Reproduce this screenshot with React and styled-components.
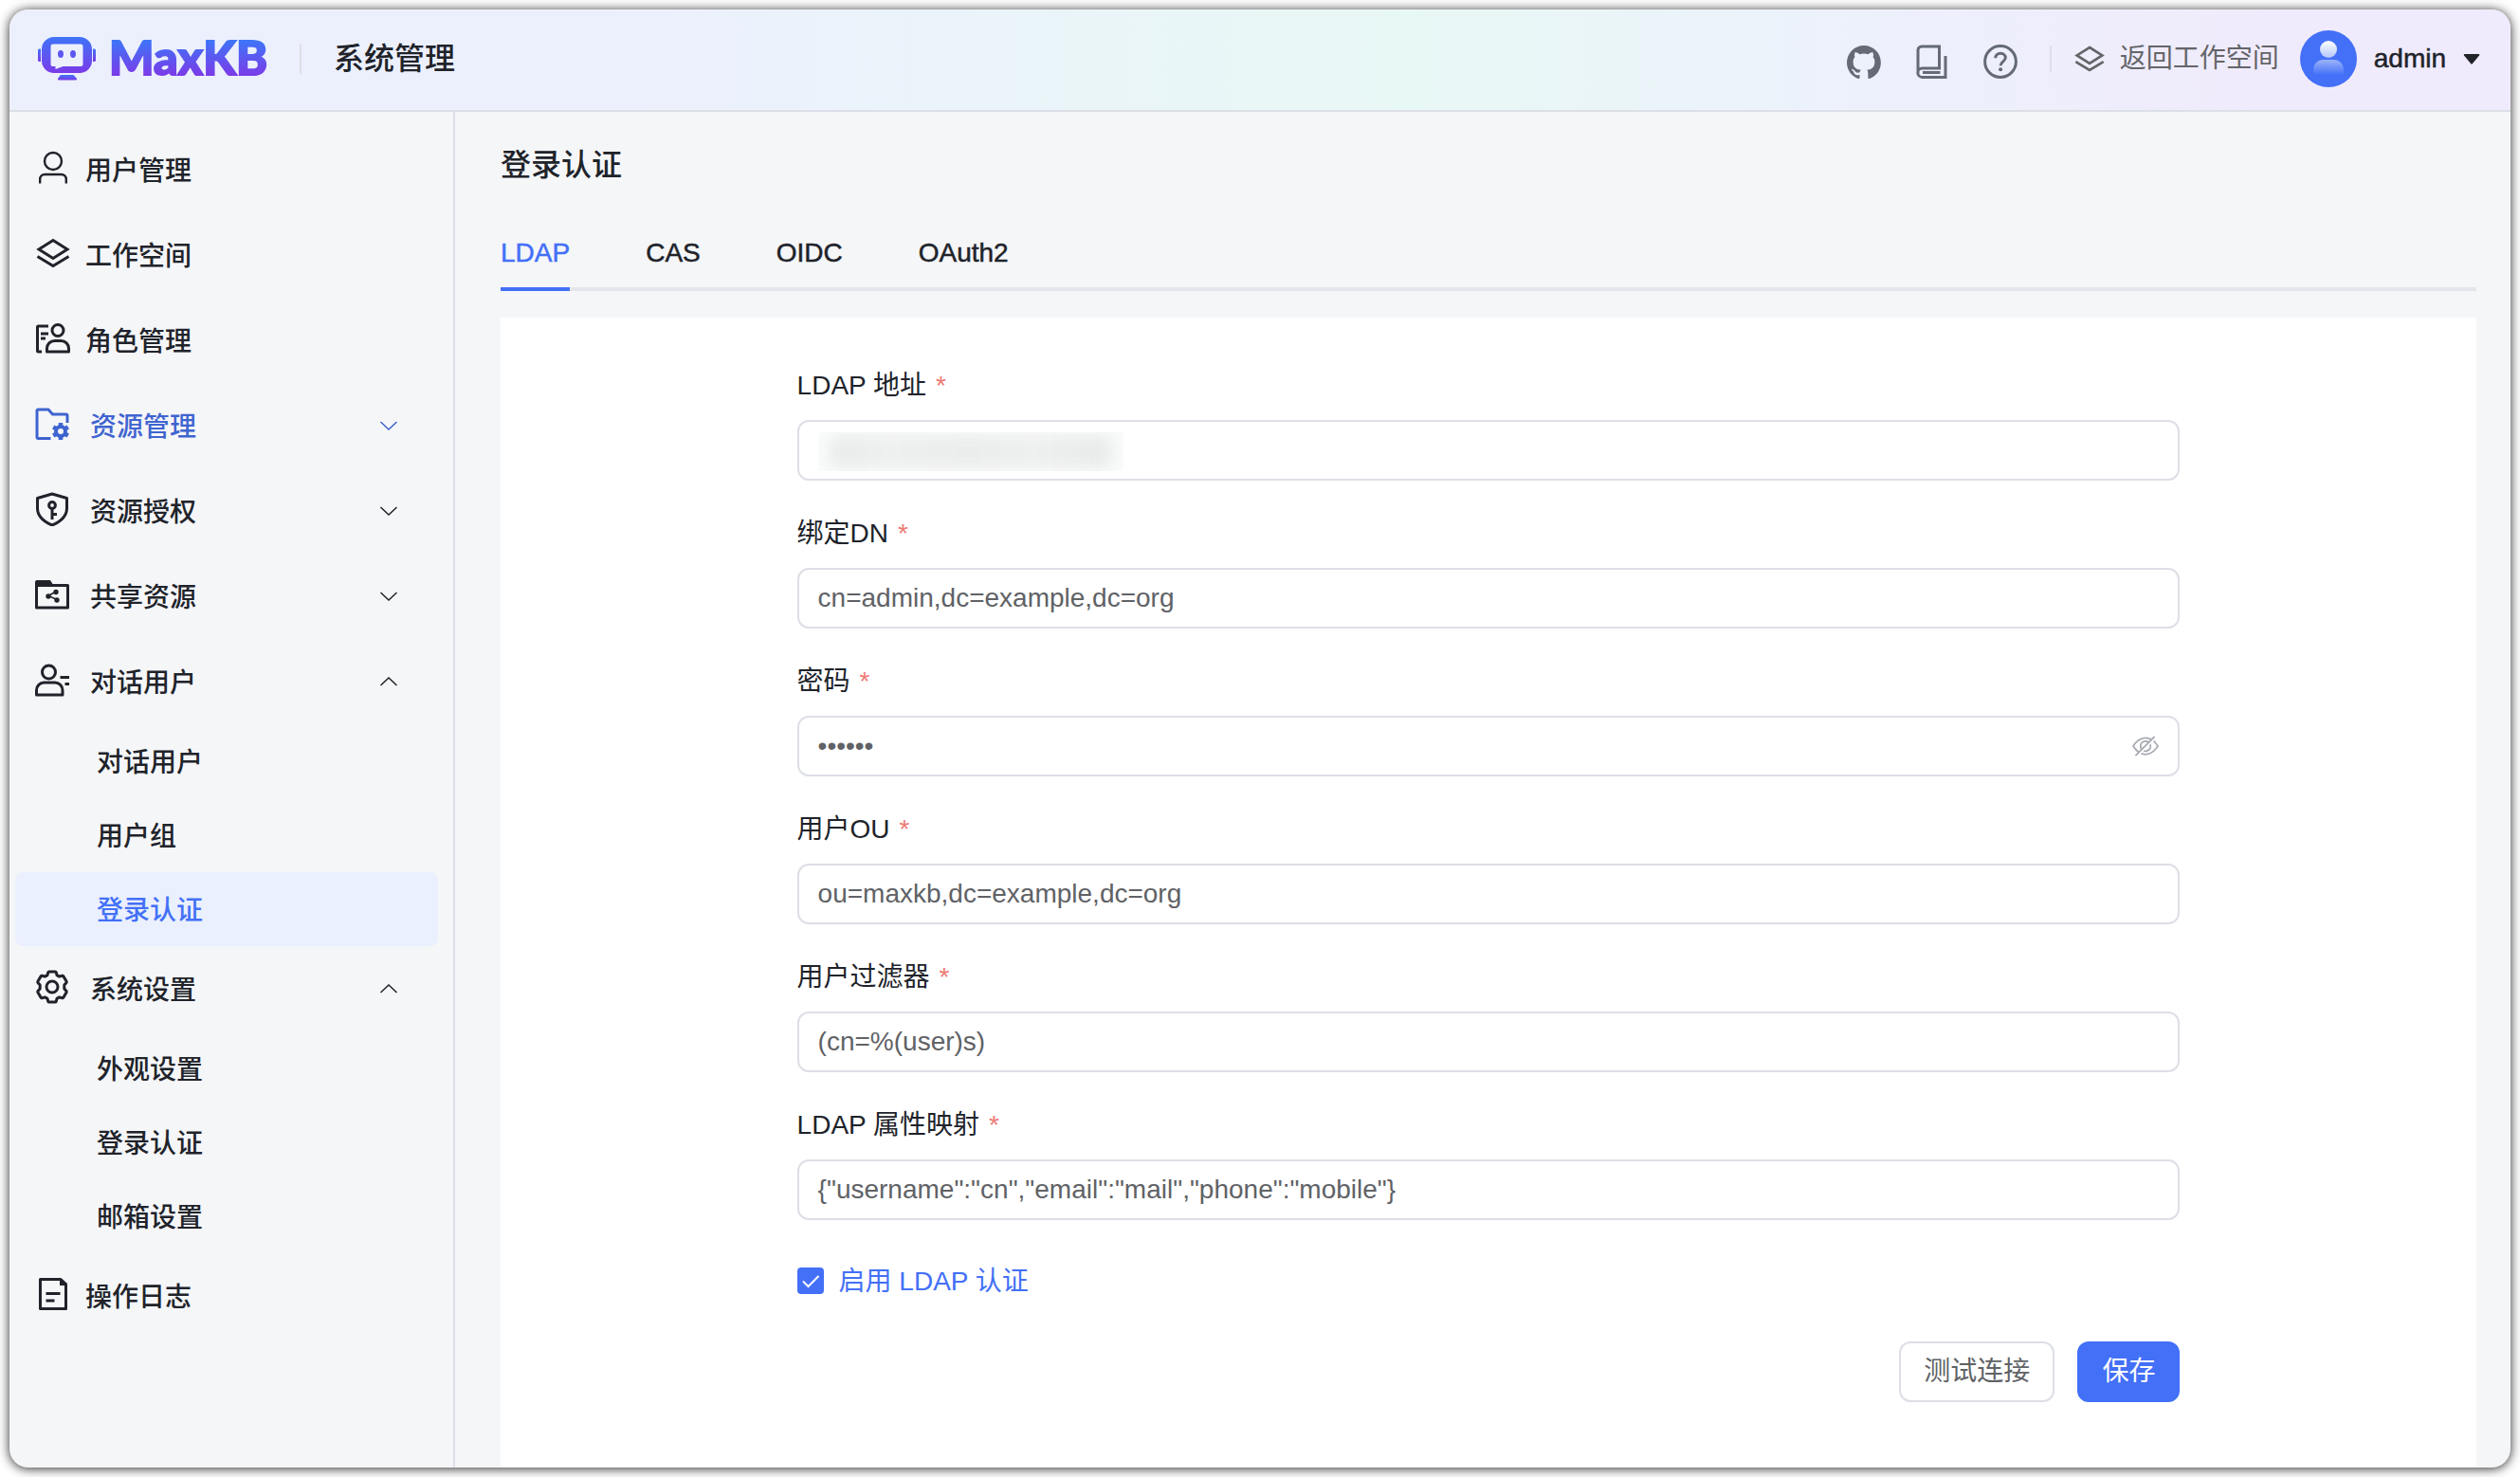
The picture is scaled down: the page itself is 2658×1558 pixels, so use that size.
import React, { useState } from "react";
import styled, { createGlobalStyle } from "styled-components";

const BLUE = "#4370f7";
const INK = "#20232a";
const LINE = "#dddfe6";

const GlobalStyle = createGlobalStyle`
  *, *::before, *::after { box-sizing: border-box; }
  body {
    margin: 0;
    background: #fff;
    color: ${INK};
    font-family: "Liberation Sans", "Noto Sans CJK SC", sans-serif;
    font-size: 28px;
    line-height: 44px;
  }
  button, input { font: inherit; color: inherit; }
`;

const Page = styled.div`
  min-height: 100vh;
  padding: 10px;
  display: flex;
`;

const Frame = styled.div`
  flex: 1;
  min-width: 0;
  display: flex;
  flex-direction: column;
  border-radius: 20px;
  overflow: hidden;
  background: #f5f6f8;
  box-shadow: 0 1px 12px rgba(0, 0, 0, 0.85);
`;

const Header = styled.header`
  display: flex;
  align-items: center;
  justify-content: space-between;
  height: 108px;
  padding: 0 32px 2px 30px;
  border-bottom: 2px solid ${LINE};
  background: linear-gradient(90deg, #ecf0fd 24%, #e8f8f5 56%, #edf0fc 76%, #f0ebfc 90%);
`;

const Brand = styled.div`
  display: flex;
  align-items: center;
`;

const BrandLink = styled.a`
  display: flex;
  align-items: center;
  gap: 13px;
  text-decoration: none;
`;

const Wordmark = styled.span`
  margin-bottom: 4px;
  font-family: Lato, sans-serif;
  font-weight: 900;
  font-size: 50px;
  line-height: 60px;
  color: transparent;
  -webkit-text-stroke: 2px transparent;
  background: linear-gradient(180deg, #3f74f8 22%, #7a3be8 82%);
  background-clip: text;
  -webkit-background-clip: text;
`;

const Divider = styled.span`
  width: 2px;
  height: ${(p) => p.$height}px;
  background: ${LINE};
`;

const SystemTitle = styled.strong`
  margin-left: 34px;
  font-size: 32px;
  font-weight: 500;
`;

const BrandDivider = styled(Divider)`
  margin-left: 34px;
`;

const HeaderActions = styled.div`
  display: flex;
  align-items: center;
`;

const IconLinks = styled.div`
  display: flex;
  gap: 36px;
  margin: 6px 34px 0 0;
`;

const IconLink = styled.a`
  display: flex;
  color: #646a76;
`;

const WorkspaceLink = styled.a`
  display: flex;
  align-items: center;
  gap: 16px;
  margin: 0 22px 0 24px;
  color: #646569;
  text-decoration: none;
`;

const AccountButton = styled.button`
  display: flex;
  align-items: center;
  gap: 18px;
  padding: 0;
  border: 0;
  background: none;
  cursor: pointer;
`;

const AccountName = styled.span`
  -webkit-text-stroke: 0.5px currentColor;
`;

const Body = styled.div`
  flex: 1;
  display: flex;
`;

const Sidebar = styled.nav`
  flex: none;
  width: 470px;
  padding: 16px 16px 16px 6px;
  border-right: 2px solid ${LINE};
  font-weight: 500;
`;

const MenuList = styled.ul`
  margin: 0;
  padding: 0;
  list-style: none;
`;

const MenuRow = styled.button`
  display: flex;
  align-items: center;
  gap: ${(p) => (p.$group ? 22 : 16)}px;
  width: 100%;
  height: 90px;
  padding: 0 42px 0 ${(p) => (p.$group ? 21 : 22)}px;
  border: 0;
  background: none;
  color: ${(p) => (p.$active ? "#3f64d0" : INK)};
  font-weight: 500;
  text-align: left;
  cursor: pointer;

  > svg:first-child { margin-bottom: 4px; }
`;

const MenuText = styled.span`
  flex: 1;
  padding-top: 3px;
`;

const SubLink = styled.a`
  display: flex;
  align-items: center;
  height: 78px;
  padding: 3px 0 0 86px;
  border-radius: 8px;
  background: ${(p) => (p.$active ? "#eaf0fd" : "transparent")};
  color: ${(p) => (p.$active ? BLUE : INK)};
  text-decoration: none;
`;

const Main = styled.main`
  flex: 1;
  min-width: 0;
  display: flex;
  flex-direction: column;
  padding: 34px 36px 0 48px;
`;

const PageTitle = styled.h1`
  margin: 0;
  font-size: 32px;
  font-weight: 500;
  line-height: 44px;
`;

const Tabs = styled.div`
  display: flex;
  gap: 80px;
  height: 80px;
  margin: 31px 0 28px;
  box-shadow: inset 0 -4px 0 #e4e6ec;
`;

const Tab = styled.button`
  padding: 4px 0 0;
  border: 0;
  border-bottom: 4px solid ${(p) => (p.$active ? BLUE : "transparent")};
  background: none;
  color: ${(p) => (p.$active ? BLUE : INK)};
  -webkit-text-stroke: 0.5px currentColor;
  cursor: pointer;
`;

const Panel = styled.section`
  flex: 1;
  padding: 48px 0 68px;
  background: #fff;
`;

const Form = styled.form`
  width: 70%;
  margin: 0 auto;
`;

const Field = styled.div`
  margin-bottom: 32px;
`;

const Label = styled.label`
  display: flex;
  gap: 10px;
  padding: 2px 0 14px;
`;

const Required = styled.span`
  color: #ee7b75;
`;

const InputBox = styled.div`
  position: relative;
  display: flex;
  align-items: center;
  height: 64px;
  padding: 0 20px;
  border: 2px solid ${LINE};
  border-radius: 12px;
  background: #fff;
`;

const Input = styled.input`
  flex: 1;
  min-width: 0;
  height: 60px;
  padding: 0;
  border: 0;
  outline: none;
  background: none;
  color: #606266;
`;

const Redaction = styled.span`
  position: absolute;
  left: 20px;
  top: 11px;
  width: 322px;
  height: 41px;
  overflow: hidden;
  background: #fafbfb;

  &::before {
    content: "";
    position: absolute;
    inset: 3px 12px;
    border-radius: 12px;
    background: linear-gradient(90deg, #e9eaea, #eeefef 20%, #ebecec 50%, #eeefef 72%, #e8e9e9);
    filter: blur(8px);
  }
`;

const EyeButton = styled.button`
  display: flex;
  padding: 0;
  border: 0;
  background: none;
  color: #a8abb2;
  cursor: pointer;
`;

const CheckRow = styled.label`
  display: flex;
  align-items: center;
  gap: 16px;
  height: 64px;
  margin-bottom: 32px;
  color: ${BLUE};
`;

const CheckText = styled.span`
  padding-top: 2px;
`;

const CheckBox = styled.span`
  position: relative;
  display: flex;
  width: 28px;
  height: 28px;

  svg {
    position: absolute;
    inset: 0;
    pointer-events: none;
  }
`;

const CheckInput = styled.input`
  appearance: none;
  width: 28px;
  height: 28px;
  margin: 0;
  border: 2px solid ${LINE};
  border-radius: 4px;

  &:checked {
    border-color: ${BLUE};
    background: ${BLUE};
  }
`;

const Buttons = styled.div`
  display: flex;
  justify-content: flex-end;
  gap: 24px;
`;

const Button = styled.button`
  height: 64px;
  padding: 0 24px;
  border: 2px solid ${(p) => (p.$primary ? BLUE : LINE)};
  border-radius: 12px;
  background: ${(p) => (p.$primary ? BLUE : "#fff")};
  color: ${(p) => (p.$primary ? "#fff" : "#606266")};
  cursor: pointer;
`;

const LogoMark = () => (
  <svg width="62" height="48" viewBox="0 0 62 48" aria-hidden="true">
    <defs>
      <linearGradient id="mark" x1="0" y1="0" x2="0" y2="1">
        <stop offset="0" stopColor="#3f74f8" />
        <stop offset="1" stopColor="#7a3be8" />
      </linearGradient>
    </defs>
    <path
      fill="url(#mark)"
      fillRule="evenodd"
      d="M17 1h27a13 13 0 0 1 13 13v12a13 13 0 0 1-13 13H17A13 13 0 0 1 4 26V14A13 13 0 0 1 17 1zM16 8.500a2.500 2.500 0 0 0-2.500 2.500v19a2 2 0 0 0 2 2h3v3l8-3h18.500a2.500 2.500 0 0 0 2.500-2.500V11a2.500 2.500 0 0 0-2.500-2.500z"
    />
    <ellipse cx="24" cy="19" rx="3" ry="4" fill="#5c57f2" />
    <ellipse cx="37" cy="19" rx="3" ry="4" fill="#5c57f2" />
    <path d="M0 15q0-1.500 1.500-1.500H3v13.500H1.500Q0 27 0 25.500z" fill="url(#mark)" />
    <path d="M61 15q0-1.500-1.500-1.500H58v13.500h1.500q1.500 0 1.500-1.500z" fill="url(#mark)" />
    <path d="M24.500 41h12q1 0 1.800.8L41 45q.5 1.500-1 1.500H22q-1.500 0-1-1.500l2.200-3.200q.5-.8 1.300-.8z" fill="url(#mark)" />
  </svg>
);

const GithubIcon = () => (
  <svg width="36" height="36" viewBox="0 0 24 24" fill="currentColor" aria-hidden="true">
    <path d="M12 .6C5.400.6 0 6 0 12.600c0 5.300 3.400 9.800 8.200 11.400.6.1.8-.3.8-.6v-2c-3.300.7-4-1.600-4-1.600-.6-1.400-1.400-1.800-1.400-1.800-1.100-.7.1-.7.1-.7 1.200.1 1.900 1.200 1.900 1.200 1 1.800 2.800 1.300 3.500 1 .1-.8.400-1.300.8-1.600-2.700-.3-5.500-1.300-5.500-5.900 0-1.300.5-2.400 1.200-3.200-.1-.3-.5-1.500.1-3.200 0 0 1-.3 3.300 1.200a11.500 11.500 0 0 1 6 0c2.300-1.500 3.300-1.200 3.300-1.200.7 1.700.2 2.900.1 3.200.8.8 1.200 1.900 1.200 3.200 0 4.600-2.800 5.600-5.500 5.900.4.4.8 1.100.8 2.200v3.300c0 .3.2.7.8.6 4.800-1.600 8.200-6.100 8.200-11.400C24 6 18.600.6 12 .6z" />
  </svg>
);

const BookIcon = () => (
  <svg width="36" height="36" viewBox="0 0 36 36" fill="none" stroke="currentColor" strokeWidth="3" aria-hidden="true">
    <path d="M3 30V6a4 4 0 0 1 4-4h18.500v23H7.500a4.700 4.700 0 0 0 0 9.400H32V12" />
    <path d="M8 29.600h18.500" />
  </svg>
);

const HelpIcon = () => (
  <svg width="36" height="36" viewBox="0 0 36 36" fill="none" stroke="currentColor" strokeWidth="3" aria-hidden="true">
    <circle cx="18" cy="18" r="16.400" />
    <path d="M12.800 14.300c0-3 2.300-5 5.300-5s5.200 2 5.200 4.700c0 3.700-5.200 4-5.200 8.200" />
    <circle cx="18.100" cy="26.200" r="2" fill="currentColor" stroke="none" />
  </svg>
);

const LayersIcon = ({ size, weight }) => (
  <svg width={size} height={size} viewBox="0 0 36 36" fill="none" stroke="currentColor" strokeWidth={weight} aria-hidden="true">
    <path d="M18 4.500 33 14 18 23.500 3 14z" />
    <path d="M1.500 21.500 18 31.500l16.500-10" />
  </svg>
);

const Avatar = () => (
  <svg width="60" height="60" viewBox="0 0 60 60" aria-hidden="true">
    <defs>
      <linearGradient id="head" x1="0" y1="0" x2="0" y2="1">
        <stop offset="0" stopColor="#fff" />
        <stop offset="1" stopColor="#b4c6fb" />
      </linearGradient>
      <linearGradient id="torso" x1="0" y1="0" x2="0" y2="1">
        <stop offset="0" stopColor="#9cb4fa" />
        <stop offset="1" stopColor={BLUE} />
      </linearGradient>
    </defs>
    <circle cx="30" cy="30" r="30" fill={BLUE} />
    <circle cx="30" cy="20" r="9" fill="url(#head)" />
    <path d="M14 47v-6a10 10 0 0 1 10-10h12a10 10 0 0 1 10 10v6z" fill="url(#torso)" />
  </svg>
);

const Caret = () => (
  <svg width="18" height="12" viewBox="0 0 18 12" aria-hidden="true">
    <path d="M1.500 1h15q1.200.2.500 1.400l-7.200 8.900q-.8.800-1.600 0L1 2.400Q.3 1.200 1.500 1z" fill={INK} />
  </svg>
);

const MenuSvg = ({ children, weight = 3 }) => (
  <svg width="36" height="36" viewBox="0 0 36 36" fill="none" stroke="currentColor" strokeWidth={weight} aria-hidden="true">
    {children}
  </svg>
);

const UserIcon = () => (
  <MenuSvg weight={2.4}>
    <circle cx="18" cy="11" r="9" />
    <path d="M4.200 34.500V30a5 5 0 0 1 5-5h17.600a5 5 0 0 1 5 5v4.500" />
  </MenuSvg>
);

const RoleIcon = () => (
  <MenuSvg>
    <path d="M13 5H2.500A1 1 0 0 0 1.500 6v25a1 1 0 0 0 1 1H6" />
    <path d="M5 13h8M5 18h5" />
    <circle cx="23" cy="9.500" r="6" />
    <path d="M11.500 32v-3.500a8 8 0 0 1 8-8h7a8 8 0 0 1 8 8V32z" strokeLinejoin="round" />
  </MenuSvg>
);

const FolderGearIcon = () => (
  <MenuSvg>
    <path d="M16.500 33.500H3.500a1.500 1.500 0 0 1-1.500-1.500V4.500A1.500 1.500 0 0 1 3.500 3H14l4.500 5h14a1.500 1.500 0 0 1 1.500 1.500V17" />
    <circle cx="27" cy="26" r="5" strokeWidth="4" />
    <path d="M27 17v3m0 12v3m7.800-13.500-2.600 1.500m-10.400 6-2.600 1.500m15.600 0-2.600-1.500m-10.400-6-2.600-1.500" strokeWidth="4.500" />
  </MenuSvg>
);

const ShieldKeyIcon = () => (
  <MenuSvg>
    <path d="m18 2 15.500 4.500V17c0 8-6 14-15.500 18C8.500 31 2.500 25 2.500 17V6.500z" strokeLinejoin="round" />
    <circle cx="18" cy="14" r="3.400" />
    <path d="M18 17v12M18 23.500h5" />
  </MenuSvg>
);

const FolderShareIcon = () => (
  <MenuSvg>
    <path d="M1.500 8.500h33V32h-33z" strokeLinejoin="round" />
    <path d="M0 10V5q0-2 2-2h14l2.500 4v3z" fill="currentColor" stroke="none" />
    <path d="m22 15-8 4.500 9 4" strokeWidth="1.500" />
    <circle cx="22" cy="15.500" r="2.700" fill="currentColor" stroke="none" />
    <circle cx="14" cy="20" r="2.700" fill="currentColor" stroke="none" />
    <circle cx="23" cy="24" r="2.700" fill="currentColor" stroke="none" />
  </MenuSvg>
);

const ChatUserIcon = () => (
  <MenuSvg>
    <circle cx="14.500" cy="10" r="7" />
    <path d="M1.500 34v-5a8 8 0 0 1 8-8H21a8 8 0 0 1 8 8v5z" strokeLinejoin="round" />
    <path d="M26.500 15.500H37M31.500 22.500H37" />
  </MenuSvg>
);

const GearIcon = () => (
  <MenuSvg>
    <path
      strokeLinejoin="round"
      d="M13 5.600 13.700 2.800q.3-.9 1.200-.9h6.200q.9 0 1.200.9l.7 2.800 2.600 1.500 2.900-.8q.9-.2 1.400.6l3.200 5.300q.4.800-.2 1.500L30.800 16v4l2.100 2.300q.6.700.2 1.500l-3.200 5.300q-.5.800-1.400.6l-2.900-.8-2.600 1.500-.7 2.800q-.3.900-1.200.9h-6.200q-.9 0-1.200-.9L13 30.400l-2.600-1.500-2.900.8q-.9.200-1.400-.6l-3.200-5.300q-.4-.8.2-1.500L5.200 20v-4l-2.100-2.300q-.6-.7-.2-1.500l3.200-5.300q.5-.8 1.400-.6l2.900.8z"
    />
    <circle cx="18" cy="18" r="6" />
  </MenuSvg>
);

const LogIcon = () => (
  <MenuSvg>
    <path d="M4.500 2.500H26l5.500 5v26h-27z" strokeLinejoin="round" />
    <path d="M25 2h2l5 5v2h-7z" fill="currentColor" stroke="none" />
    <path d="M10.500 17.500h15M10.500 25h9" />
  </MenuSvg>
);

const Chevron = ({ up }) => (
  <svg width="20" height="10" viewBox="0 0 20 10" fill="none" stroke="currentColor" strokeWidth="1.500" aria-hidden="true">
    <path d={up ? "M1.500 9 10 1l8.500 8" : "M1.500 1 10 9l8.500-8"} />
  </svg>
);

const EyeOffIcon = () => (
  <svg width="28" height="28" viewBox="0 0 1024 1024" fill="currentColor" aria-hidden="true">
    <path d="M876.800 156.800c0-9.600-3.200-16-9.600-22.400-6.400-6.400-12.800-9.600-22.400-9.600-9.600 0-16 3.200-22.400 9.600L736 220.800c-64-32-137.600-51.200-224-60.800-160 16-288 73.600-377.600 176C44.800 438.400 0 496 0 512s48 73.600 134.400 176c22.400 25.600 44.800 48 73.600 67.200l-86.400 89.600c-6.400 6.400-9.600 12.800-9.600 22.400 0 9.600 3.200 16 9.600 22.400 6.400 6.400 12.800 9.600 22.400 9.600 9.600 0 16-3.200 22.400-9.600l704-710.400c3.200-6.400 6.400-12.800 6.400-22.400Zm-646.400 528c-76.800-70.400-128-128-153.600-172.800 28.800-48 80-105.600 153.600-172.800C304 272 400 230.400 512 224c64 3.200 124.800 19.200 176 44.800l-54.400 54.400C598.400 300.800 560 288 512 288c-64 0-115.200 22.400-160 64s-64 96-64 160c0 48 12.800 89.600 35.200 124.800L256 707.200c-9.600-6.400-19.200-16-25.600-22.400Zm140.800-96c-12.800-22.400-19.200-48-19.200-76.800 0-44.800 16-83.200 48-112 32-28.800 67.200-48 112-48 28.800 0 54.400 6.400 73.600 19.200L371.200 588.800ZM889.600 336c-12.800-16-28.800-28.800-41.600-41.600l-48 48c73.600 67.200 124.800 124.800 150.400 169.600-28.800 48-80 105.600-153.600 172.800-73.600 67.200-172.800 108.800-284.800 115.200-51.200-3.200-99.200-12.800-140.800-28.800l-48 48c57.600 22.400 118.400 38.400 188.800 44.800 160-16 288-73.600 377.600-176C979.200 585.600 1024 528 1024 512s-48-73.600-134.400-176Z" />
    <path d="M511.998 672c-12.800 0-25.600-3.200-38.400-6.400l-51.200 51.200c28.800 12.800 57.600 19.200 89.600 19.200 64 0 115.200-22.400 160-64 41.600-41.600 64-96 64-160 0-32-6.400-64-19.200-89.600l-51.200 51.200c3.200 12.800 6.400 25.600 6.400 38.400 0 44.800-16 83.200-48 112-32 28.800-67.200 48-112 48Z" />
  </svg>
);

const MENU = [
  { text: "用户管理", icon: <UserIcon /> },
  { text: "工作空间", icon: <LayersIcon size={36} weight={3} /> },
  { text: "角色管理", icon: <RoleIcon /> },
  { text: "资源管理", icon: <FolderGearIcon />, group: true, active: true },
  { text: "资源授权", icon: <ShieldKeyIcon />, group: true },
  { text: "共享资源", icon: <FolderShareIcon />, group: true },
  {
    text: "对话用户",
    icon: <ChatUserIcon />,
    group: true,
    items: [{ text: "对话用户" }, { text: "用户组" }, { text: "登录认证", active: true }],
  },
  {
    text: "系统设置",
    icon: <GearIcon />,
    group: true,
    items: [{ text: "外观设置" }, { text: "登录认证" }, { text: "邮箱设置" }],
  },
  { text: "操作日志", icon: <LogIcon /> },
];

const TABS = ["LDAP", "CAS", "OIDC", "OAuth2"];

const FIELDS = [
  { id: "address", label: "LDAP 地址", value: "", hidden: true },
  { id: "dn", label: "绑定DN", value: "cn=admin,dc=example,dc=org" },
  { id: "password", label: "密码", value: "secret", secret: true },
  { id: "ou", label: "用户OU", value: "ou=maxkb,dc=example,dc=org" },
  { id: "filter", label: "用户过滤器", value: "(cn=%(user)s)" },
  { id: "mapping", label: "LDAP 属性映射", value: '{"username":"cn","email":"mail","phone":"mobile"}' },
];

function MenuEntry({ text, icon, group, active, items }) {
  const [open, setOpen] = useState(Boolean(items));
  return (
    <li>
      <MenuRow type="button" $group={group} $active={active} onClick={() => items && setOpen(!open)}>
        {icon}
        <MenuText>{text}</MenuText>
        {group && <Chevron up={open} />}
      </MenuRow>
      {items && open && (
        <MenuList>
          {items.map((item) => (
            <li key={item.text}>
              <SubLink href="#" $active={item.active}>{item.text}</SubLink>
            </li>
          ))}
        </MenuList>
      )}
    </li>
  );
}

function FormField({ id, label, value, secret, hidden }) {
  const [shown, setShown] = useState(false);
  return (
    <Field>
      <Label htmlFor={id}>
        {label}
        <Required>*</Required>
      </Label>
      <InputBox>
        <Input id={id} type={secret && !shown ? "password" : "text"} defaultValue={value} autoComplete="off" />
        {hidden && <Redaction />}
        {secret && (
          <EyeButton type="button" onClick={() => setShown(!shown)}>
            <EyeOffIcon />
          </EyeButton>
        )}
      </InputBox>
    </Field>
  );
}

export default function App() {
  const [tab, setTab] = useState("LDAP");
  return (
    <Page>
      <GlobalStyle />
      <Frame>
        <Header>
          <Brand>
            <BrandLink href="#">
              <LogoMark />
              <Wordmark>MaxKB</Wordmark>
            </BrandLink>
            <BrandDivider $height={32} />
            <SystemTitle>系统管理</SystemTitle>
          </Brand>
          <HeaderActions>
            <IconLinks>
              <IconLink href="#"><GithubIcon /></IconLink>
              <IconLink href="#"><BookIcon /></IconLink>
              <IconLink href="#"><HelpIcon /></IconLink>
            </IconLinks>
            <Divider $height={28} />
            <WorkspaceLink href="#">
              <LayersIcon size={32} weight={3} />
              返回工作空间
            </WorkspaceLink>
            <AccountButton type="button">
              <Avatar />
              <AccountName>admin</AccountName>
              <Caret />
            </AccountButton>
          </HeaderActions>
        </Header>
        <Body>
          <Sidebar>
            <MenuList>
              {MENU.map((entry) => (
                <MenuEntry key={entry.text} {...entry} />
              ))}
            </MenuList>
          </Sidebar>
          <Main>
            <PageTitle>登录认证</PageTitle>
            <Tabs role="tablist">
              {TABS.map((name) => (
                <Tab
                  key={name}
                  type="button"
                  role="tab"
                  aria-selected={name === tab}
                  $active={name === tab}
                  onClick={() => setTab(name)}
                >
                  {name}
                </Tab>
              ))}
            </Tabs>
            <Panel>
              <Form onSubmit={(e) => e.preventDefault()}>
                {FIELDS.map((field) => (
                  <FormField key={field.id} {...field} />
                ))}
                <CheckRow>
                  <CheckBox>
                    <CheckInput type="checkbox" defaultChecked />
                    <svg width="28" height="28" viewBox="0 0 28 28" fill="none" stroke="#fff" strokeWidth="2" aria-hidden="true">
                      <path d="m6 14.500 5.500 5.500L22.500 9" />
                    </svg>
                  </CheckBox>
                  <CheckText>启用 LDAP 认证</CheckText>
                </CheckRow>
                <Buttons>
                  <Button type="button">测试连接</Button>
                  <Button type="submit" $primary>保存</Button>
                </Buttons>
              </Form>
            </Panel>
          </Main>
        </Body>
      </Frame>
    </Page>
  );
}
